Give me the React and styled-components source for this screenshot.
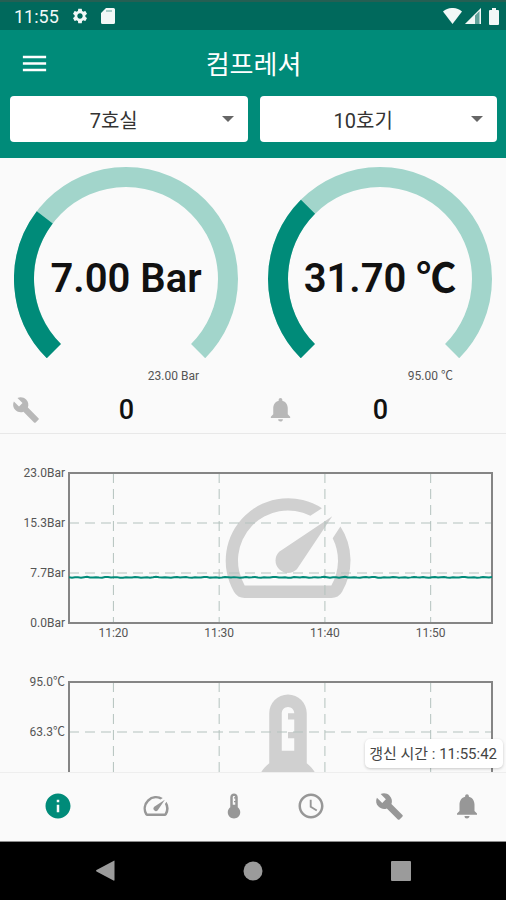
import React, {useState} from 'react';
import styled, {createGlobalStyle} from 'styled-components';
import {
    MdSettings,
    MdMenu,
    MdBuild,
    MdNotifications,
    MdInfo,
    MdSpeed,
    MdDeviceThermostat,
    MdAccessTime
} from 'react-icons/md';

const TEAL = '#008b79';

const GlobalStyle = createGlobalStyle`
    * {
        box-sizing: border-box;
    }
    body {
        margin: 0;
        background: #fafafa;
        color: #111111;
        font-family: Roboto, "Noto Sans CJK KR", sans-serif;
    }
    button {
        padding: 0;
        border: none;
        background: transparent;
        cursor: pointer;
    }
    svg {
        display: block;
    }
`;

const Screen = styled.div`
    display: flex;
    flex-direction: column;
    height: 100vh;
`;

const StatusBar = styled.div`
    display: flex;
    align-items: center;
    gap: 12px;
    height: 30px;
    padding: 0 6px 0 14px;
    border-top: 2px solid #255f53;
    background: #00695c;
    color: #f2f8f7;
    font-size: 18px;
`;

const StatusRight = styled.div`
    display: flex;
    align-items: center;
    gap: 3px;
    margin-left: auto;
`;

const Header = styled.header`
    padding: 0 9px 16px 10px;
    background: ${TEAL};
    color: #ffffff;
`;

const TitleRow = styled.div`
    display: grid;
    grid-template-columns: 48px 1fr 48px;
    align-items: center;
    height: 66px;
`;

const MenuButton = styled.button`
    display: flex;
    justify-content: center;
    color: #ffffff;
`;

const Title = styled.h1`
    margin: 0;
    padding-top: 4px;
    font-size: 26px;
    font-weight: 400;
    line-height: 36px;
    text-align: center;
`;

const SelectRow = styled.div`
    display: grid;
    grid-template-columns: 1fr 1fr;
    gap: 12px;
`;

const SelectBox = styled.label`
    display: grid;
    align-items: center;
    > * {
        grid-area: 1 / 1;
    }
    svg {
        justify-self: end;
        margin-right: 14px;
        pointer-events: none;
    }
`;

const Select = styled.select`
    appearance: none;
    width: 100%;
    height: 46px;
    padding: 4px 30px 0 0;
    border: none;
    border-radius: 4px;
    background: #ffffff;
    color: #333333;
    font-family: inherit;
    font-size: 20px;
    text-align: center;
    text-align-last: center;
`;

const Main = styled.div`
    position: relative;
    flex: 1;
    min-height: 0;
`;

const Scroll = styled.main`
    height: 100%;
    overflow-y: auto;
    scrollbar-width: none;
`;

const Gauges = styled.section`
    display: grid;
    grid-template-columns: 1fr 1fr;
    gap: 2px;
    padding-top: 9px;
    border-bottom: 1px solid #e8e8e8;
`;

const Dial = styled.div`
    display: grid;
    justify-items: center;
    align-items: start;
    > * {
        grid-area: 1 / 1;
    }
`;

const DialValue = styled.div`
    padding-top: 88px;
    font-size: 40px;
    font-weight: 600;
    line-height: 48px;
    white-space: nowrap;
`;

const DialMax = styled.div`
    padding: 8px 53px 0 0;
    color: #555555;
    font-size: 12px;
    line-height: 20px;
    text-align: right;
`;

const CountRow = styled.div`
    display: grid;
    grid-template-columns: 32px 1fr 32px;
    align-items: center;
    height: 47px;
    padding: 0 11px 0 12px;
    color: #b8b8b8;
`;

const Count = styled.span`
    color: #111111;
    font-size: 27px;
    font-weight: 500;
    text-align: center;
`;

const ChartRow = styled.section`
    display: grid;
    grid-template-columns: 65px 1fr;
    column-gap: 4px;
    padding-top: 39px;
    & + & {
        padding-top: 38px;
    }
`;

const YAxis = styled.div`
    display: flex;
    flex-direction: column;
    justify-content: space-between;
    height: 164px;
    margin: -7px 0;
    color: #555555;
    font-size: 12px;
    line-height: 14px;
    text-align: right;
`;

const Plot = styled.div`
    display: grid;
    justify-items: center;
    > * {
        grid-area: 1 / 1;
    }
    > svg {
        color: #d0d0d0;
    }
`;

const PlotArea = styled.div`
    width: 100%;
    padding-right: 14px;
    > svg {
        width: 100%;
        height: 171px;
        overflow: visible;
    }
    text {
        fill: #555555;
        font-size: 12px;
        text-anchor: middle;
    }
`;

const Updated = styled.div`
    position: absolute;
    right: 3px;
    bottom: 4px;
    padding: 2px 6px 0 4px;
    border-radius: 5px;
    background: #ffffff;
    box-shadow: 0 1px 3px rgba(0, 0, 0, 0.2);
    color: #444444;
    font-size: 15px;
    line-height: 27px;
`;

const Tabs = styled.nav`
    display: grid;
    grid-template-columns: 3fr repeat(5, 2fr);
    height: 70px;
    padding-bottom: 2px;
    border-top: 1px solid #eeeeee;
    border-bottom: 1px solid #8c8c8c;
    background: #fafafa;
`;

const Tab = styled.button`
    display: flex;
    align-items: center;
    justify-content: center;
    color: ${props => (props.$active ? TEAL : '#979797')};
`;

const SystemBar = styled.div`
    display: flex;
    align-items: center;
    justify-content: space-between;
    height: 58px;
    padding: 0 94px;
    background: #000000;
`;

// 270 degree arc, open at the bottom
const RADIUS = 102;
const CENTER = 112;

function point(deg) {
    const rad = (deg * Math.PI) / 180;
    return `${CENTER + RADIUS * Math.cos(rad)} ${CENTER + RADIUS * Math.sin(rad)}`;
}

function arc(from, sweep) {
    return `M${point(from)} A${RADIUS} ${RADIUS} 0 ${sweep > 180 ? 1 : 0} 1 ${point(from + sweep)}`;
}

function Gauge({value, max, unit, icon, count}) {
    return (
        <div>
            <Dial>
                <svg width="224" height="191" viewBox="0 0 224 191" fill="none" strokeWidth="20">
                    <path d={arc(135, 270)} stroke="#a2d5cb"/>
                    <path d={arc(135, (270 * value) / max)} stroke={TEAL}/>
                </svg>
                <DialValue>{value.toFixed(2)} {unit}</DialValue>
            </Dial>
            <DialMax>{max.toFixed(2)} {unit}</DialMax>
            <CountRow>
                {icon}
                <Count>{count}</Count>
            </CountRow>
        </div>
    );
}

const times = ['11:20', '11:30', '11:40', '11:50'];

function Chart({icon, labels, value, max}) {
    const samples = Array.from({length: 142}, (_, i) => {
        const noise = Math.sin(i * 1.9) * 0.3 + Math.sin(i * 0.8) * 0.2;
        return `${i * 3},${150 - (150 * value) / max + noise}`;
    });
    return (
        <ChartRow>
            <YAxis>
                {labels.map(label => <span key={label}>{label}</span>)}
            </YAxis>
            <Plot>
                {icon}
                <PlotArea>
                    <svg>
                        <g stroke="#b4c2be" strokeDasharray="10 6">
                            <line x1="0" x2="100%" y1="50" y2="50"/>
                            <line x1="0" x2="100%" y1="100" y2="100"/>
                            {times.map((time, i) => {
                                const x = `${10.5 + i * 25}%`;
                                return <line key={time} x1={x} x2={x} y1="0" y2="150"/>;
                            })}
                        </g>
                        <rect width="100%" height="150" fill="none" stroke="#858585" strokeWidth="2"/>
                        <svg width="100%" height="150" viewBox="0 0 423 150" preserveAspectRatio="none">
                            <polyline
                                points={samples.join(' ')}
                                fill="none"
                                stroke={TEAL}
                                strokeWidth="2"
                                vectorEffect="non-scaling-stroke"
                            />
                        </svg>
                        {times.map((time, i) => (
                            <text key={time} x={`${10.5 + i * 25}%`} y="164">{time}</text>
                        ))}
                    </svg>
                </PlotArea>
            </Plot>
        </ChartRow>
    );
}

function Dropdown({label, options}) {
    return (
        <SelectBox>
            <Select aria-label={label}>
                {options.map(option => <option key={option}>{option}</option>)}
            </Select>
            <svg width="12" height="6" viewBox="0 0 12 6">
                <path d="M0 0h12L6 6z" fill="#666666"/>
            </svg>
        </SelectBox>
    );
}

const tabs = [
    {name: '정보', icon: <MdInfo size={30}/>},
    {name: '압력', icon: <MdSpeed size={30}/>},
    {name: '온도', icon: <MdDeviceThermostat size={30}/>},
    {name: '시간', icon: <MdAccessTime size={30}/>},
    {name: '정비', icon: <MdBuild size={29}/>},
    {name: '알림', icon: <MdNotifications size={30}/>}
];

export default function App() {
    const [active, setActive] = useState('정보');
    return (
        <Screen>
            <GlobalStyle/>
            <StatusBar>
                <span>11:55</span>
                <MdSettings size={18}/>
                <svg width="14" height="16" viewBox="0 0 14 16" fill="currentColor">
                    <path d="M5 0h7.5a1.5 1.5 0 0 1 1.5 1.5v13a1.5 1.5 0 0 1-1.5 1.5h-11A1.5 1.5 0 0 1 0 14.500V5z"/>
                    <path d="M5 2h6v2H5z" fill="#00695c" opacity="0.3"/>
                </svg>
                <StatusRight>
                    <svg width="19" height="16" viewBox="0 0 19 16" fill="currentColor">
                        <path d="M0 3.5C5.5-1.2 13.5-1.2 19 3.5L9.5 16z"/>
                    </svg>
                    <svg width="16" height="16" viewBox="0 0 16 16" fill="currentColor">
                        <path d="M16 0v16H0z" opacity="0.4"/>
                        <path d="M10 6v10H0zM16 0v16h-1.500V3L10 7.500V6z"/>
                    </svg>
                    <svg width="16" height="17" viewBox="0 0 16 17" fill="currentColor">
                        <path d="M8 0h4v2h2q1 0 1 1v13q0 1-1 1H6q-1 0-1-1V3q0-1 1-1h2z"/>
                    </svg>
                </StatusRight>
            </StatusBar>
            <Header>
                <TitleRow>
                    <MenuButton aria-label="메뉴"><MdMenu size={31}/></MenuButton>
                    <Title>컴프레셔</Title>
                </TitleRow>
                <SelectRow>
                    <Dropdown label="호실" options={['7호실']}/>
                    <Dropdown label="호기" options={['10호기']}/>
                </SelectRow>
            </Header>
            <Main>
                <Scroll>
                    <Gauges>
                        <Gauge value={7} max={23} unit="Bar" count={0} icon={<MdBuild size={28}/>}/>
                        <Gauge value={31.7} max={95} unit="℃" count={0} icon={<MdNotifications size={29}/>}/>
                    </Gauges>
                    <Chart
                        icon={<MdSpeed size={150}/>}
                        labels={['23.0Bar', '15.3Bar', '7.7Bar', '0.0Bar']}
                        value={7}
                        max={23}
                    />
                    <Chart
                        icon={<MdDeviceThermostat size={150}/>}
                        labels={['95.0℃', '63.3℃', '31.7℃', '0.0℃']}
                        value={31.7}
                        max={95}
                    />
                </Scroll>
                <Updated>갱신 시간 : 11:55:42</Updated>
            </Main>
            <Tabs>
                {tabs.map(({name, icon}) => (
                    <Tab
                        key={name}
                        aria-label={name}
                        $active={name === active}
                        onClick={() => setActive(name)}
                    >
                        {icon}
                    </Tab>
                ))}
            </Tabs>
            <SystemBar>
                <button aria-label="뒤로">
                    <svg width="22" height="22" viewBox="0 0 22 22" fill="#9b9b9b">
                        <path d="M20.5 1v19q0 1-1 .6L2.5 11.5q-1-.8 0-1.5L19.5.9q1-.6 1 .1z"/>
                    </svg>
                </button>
                <button aria-label="홈">
                    <svg width="20" height="20" viewBox="0 0 20 20" fill="#9b9b9b">
                        <circle cx="10" cy="10" r="9.5"/>
                    </svg>
                </button>
                <button aria-label="최근 앱">
                    <svg width="22" height="22" viewBox="0 0 22 22" fill="#9b9b9b">
                        <rect x="1" y="1" width="20" height="20" rx="1"/>
                    </svg>
                </button>
            </SystemBar>
        </Screen>
    );
}
